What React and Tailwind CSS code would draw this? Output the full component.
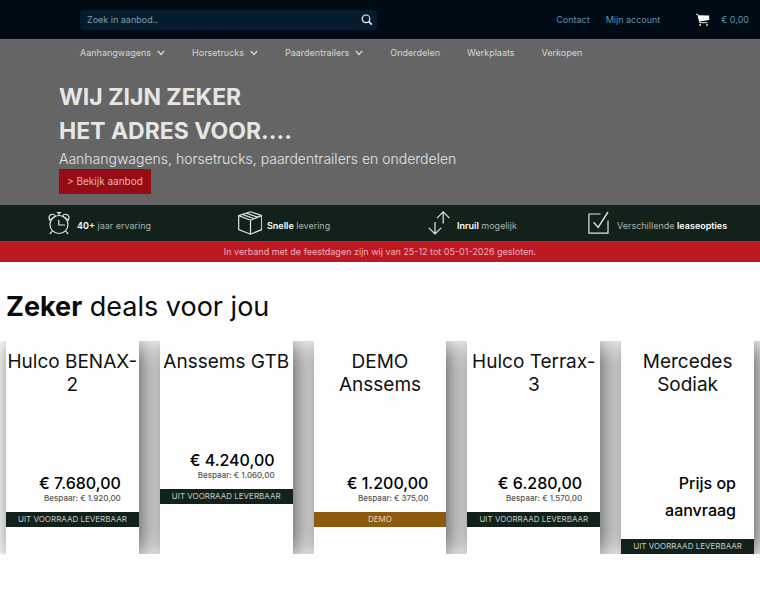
import clsx from "clsx";

const navItems = [
    { label: "Aanhangwagens", sub: true },
    { label: "Horsetrucks", sub: true },
    { label: "Paardentrailers", sub: true },
    { label: "Onderdelen" },
    { label: "Werkplaats" },
    { label: "Verkopen" },
];

const deals = [
    { id: 1, title: ["Hulco BENAX-", "2"], price: "€ 7.680,00", saving: "€ 1.920,00", status: "UIT VOORRAAD LEVERBAAR" },
    { id: 2, title: ["Anssems GTB"], price: "€ 4.240,00", saving: "€ 1.060,00", status: "UIT VOORRAAD LEVERBAAR" },
    { id: 3, title: ["DEMO", "Anssems"], price: "€ 1.200,00", saving: "€ 375,00", status: "DEMO", demo: true },
    { id: 4, title: ["Hulco Terrax-", "3"], price: "€ 6.280,00", saving: "€ 1.570,00", status: "UIT VOORRAAD LEVERBAAR" },
    { id: 5, title: ["Mercedes", "Sodiak"], price: "Prijs op aanvraag", status: "UIT VOORRAAD LEVERBAAR" },
];

function Chevron() {
    return (
        <svg viewBox="0 0 8 6" className="w-2 h-1.5" fill="none" stroke="currentColor" strokeWidth="1.4">
            <path d="M0.8 1 L4 4.4 L7.2 1" />
        </svg>
    );
}

function SearchIcon() {
    return (
        <svg viewBox="0 0 12 12" className="w-3 h-3" fill="none" stroke="currentColor" strokeWidth="1.2">
            <circle cx="5" cy="4.8" r="3.8" />
            <path d="M7.8 7.6 L10.8 10.6" strokeWidth="1.6" />
        </svg>
    );
}

function CartIcon() {
    return (
        <svg viewBox="0 0 14 13" className="w-3.5 h-3.5" fill="none" stroke="currentColor">
            <path d="M0 0.8 H1.8 L3.8 9.2 H11.6" strokeWidth="0.9" />
            <path d="M2 1.8 L13.2 2 V6.4 L3.4 8 Z" fill="currentColor" stroke="none" />
            <circle cx="4.2" cy="11.4" r="0.9" fill="currentColor" stroke="none" />
            <circle cx="11" cy="11.4" r="0.9" fill="currentColor" stroke="none" />
        </svg>
    );
}

function UspIcon({ children }) {
    return (
        <svg viewBox="0 0 24 24" className="w-6 h-6 shrink-0 text-[#dfe5e2]" fill="none" stroke="currentColor" strokeWidth="1.2">
            {children}
        </svg>
    );
}

const usps = [
    {
        icon: (
            <UspIcon>
                <circle cx="11" cy="13.5" r="9" />
                <path d="M10.8 9 V14 H17" />
                <path d="M8.8 1.6 H13.2 M11 1.6 V4.5" />
                <path d="M1.9 9.2 C0.2 6.6 1.2 4 3.6 3.4 C5.2 3 6.6 3.6 7.4 5 Z M20.1 9.2 C21.8 6.6 20.8 4 18.4 3.4 C16.8 3 15.4 3.6 14.6 5 Z" />
                <path d="M4.2 20.2 L1.8 23 M17.8 20.2 L20.2 23" />
            </UspIcon>
        ),
        text: <><b className="font-semibold text-white">40+</b> jaar ervaring</>,
    },
    {
        icon: (
            <UspIcon>
                <path d="M0.7 4.6 L12.5 0.8 L23.7 4.6 V18.6 L12.5 23.2 L0.7 18.6 Z" />
                <path d="M0.7 4.6 L12.5 9.2 L23.7 4.6 M12.5 9.2 V23.2" />
                <path d="M4.4 3.4 L16 7.8 M8.4 2.1 L20 6.3" />
            </UspIcon>
        ),
        text: <><b className="font-semibold text-white">Snelle</b> levering</>,
    },
    {
        icon: (
            <UspIcon>
                <path d="M7 11 V23 M0.8 16.8 L7 23 L13.2 16.8" />
                <path d="M15.2 12.5 V0.9 M9 7.1 L15.2 0.9 L21.4 7.1" />
            </UspIcon>
        ),
        text: <><b className="font-semibold text-white">Inruil</b> mogelijk</>,
    },
    {
        icon: (
            <UspIcon>
                <path d="M12.5 3 H0.9 V22.2 H20 V9.5" />
                <path d="M5.6 11.2 L10.2 16.4 L20 1" strokeWidth="1.4" />
            </UspIcon>
        ),
        text: <>Verschillende <b className="font-semibold text-white">leaseopties</b></>,
        last: true,
    },
];

function DealCard({ data }) {
    return (
        <li className="shadow-[5px_2px_24px_rgba(0,0,0,0.68)]">
            {/* The positioned body keeps the shadow of the next card off this one */}
            <div className="relative h-full bg-[#fefefe] pt-[9px]">
                <h3 className="text-center text-[19px] leading-[23px] whitespace-nowrap text-[#111]">
                    {data.title.map((line) => (
                        <span key={line} className="block">{line}</span>
                    ))}
                </h3>
                <div className="mt-[74px] pr-[18px] pl-7 text-right">
                    <p className="text-[16px] leading-[27px] font-medium text-black">{data.price}</p>
                    <p className="-mt-1 mb-2 h-[11px] text-[8px] leading-[11px] font-medium whitespace-nowrap text-[#555]">
                        {data.saving && <>Bespaar: {data.saving}</>}
                    </p>
                </div>
                <p
                    className={clsx(
                        "text-center text-[8px] leading-[15px] whitespace-nowrap",
                        data.demo ? "bg-[#8e5a10] text-[#e6d3b4]" : "bg-[#12221a] text-[#c3cbc7]"
                    )}
                >
                    {data.status}
                </p>
            </div>
        </li>
    );
}

export default function App() {
    return (
        <div className="min-h-screen bg-[#fefefe] font-[Inter,sans-serif]">
            {/* Top bar */}
            <header className="flex items-center h-[39px] bg-[#000b16] pl-20 pr-[11px] text-[9px] text-[#5f93ab]">
                <form className="flex items-center w-[297px] h-5 rounded bg-[#051c2e] pl-[7px] pr-1">
                    <input
                        type="text"
                        aria-label="Zoek in aanbod"
                        placeholder="Zoek in aanbod.."
                        className="grow min-w-0 bg-transparent text-[9px] outline-none placeholder:text-[#7ba0b0]"
                    />
                    <button type="button" aria-label="Zoeken" className="text-[#e6f0f5]">
                        <SearchIcon />
                    </button>
                </form>
                <div className="flex items-center ml-auto">
                    <a href="#contact">Contact</a>
                    <a href="#account" className="ml-4">Mijn account</a>
                    <a href="#cart" className="flex items-center ml-9 gap-[11px]">
                        <span className="text-white"><CartIcon /></span>
                        € 0,00
                    </a>
                </div>
            </header>

            {/* Hero */}
            <section className="bg-[#656565] pb-[11px]">
                <nav className="flex items-center gap-[27px] h-[27px] pl-20 text-[9px] text-[#d6d6d6]">
                    {navItems.map((item) => (
                        <a key={item.label} href="#nav" className="flex items-center gap-1.5">
                            {item.label}
                            {item.sub && <Chevron />}
                        </a>
                    ))}
                </nav>
                <div className="pt-[14px] pl-[59px]">
                    <h1 className="text-[23px] leading-[34px] font-bold text-[#e6e6e6]">
                        WIJ ZIJN ZEKER<br />HET ADRES VOOR....
                    </h1>
                    <p className="text-[14px] leading-[21px] font-light text-[#e6e6e6]">
                        Aanhangwagens, horsetrucks, paardentrailers en onderdelen
                    </p>
                    <a
                        href="#aanbod"
                        className="inline-block align-top bg-[#960c14] px-2 text-[10px] leading-[25px] text-[#e3b5b8]"
                    >
                        &gt; Bekijk aanbod
                    </a>
                </div>
            </section>

            {/* USP bar */}
            <ul className="grid grid-cols-4 h-9 bg-[#12221a] text-[9px] leading-[18px] text-[#a9b3ae]">
                {usps.map((usp, i) => (
                    <li
                        key={i}
                        className={clsx("flex items-end gap-[5px] pb-1.5 whitespace-nowrap", usp.last ? "pl-[18px]" : "pl-12")}
                    >
                        {usp.icon}
                        <span>{usp.text}</span>
                    </li>
                ))}
            </ul>
            <p className="bg-[#be1823] text-center text-[9px] leading-[21px] text-[#eeb3b7]">
                In verband met de feestdagen zijn wij van 25-12 tot 05-01-2026 gesloten.
            </p>

            {/* Deals */}
            <main className="pt-[26px]">
                <h2 className="px-1.5 text-[27px] leading-[38px] text-[#0a0a0a]">
                    <b className="font-bold">Zeker</b> deals voor jou
                </h2>
                <ul className="grid grid-cols-5 gap-[21px] mt-[15px] px-1.5 overflow-hidden">
                    {deals.map((deal) => (
                        <DealCard key={deal.id} data={deal} />
                    ))}
                </ul>
            </main>
        </div>
    );
}
